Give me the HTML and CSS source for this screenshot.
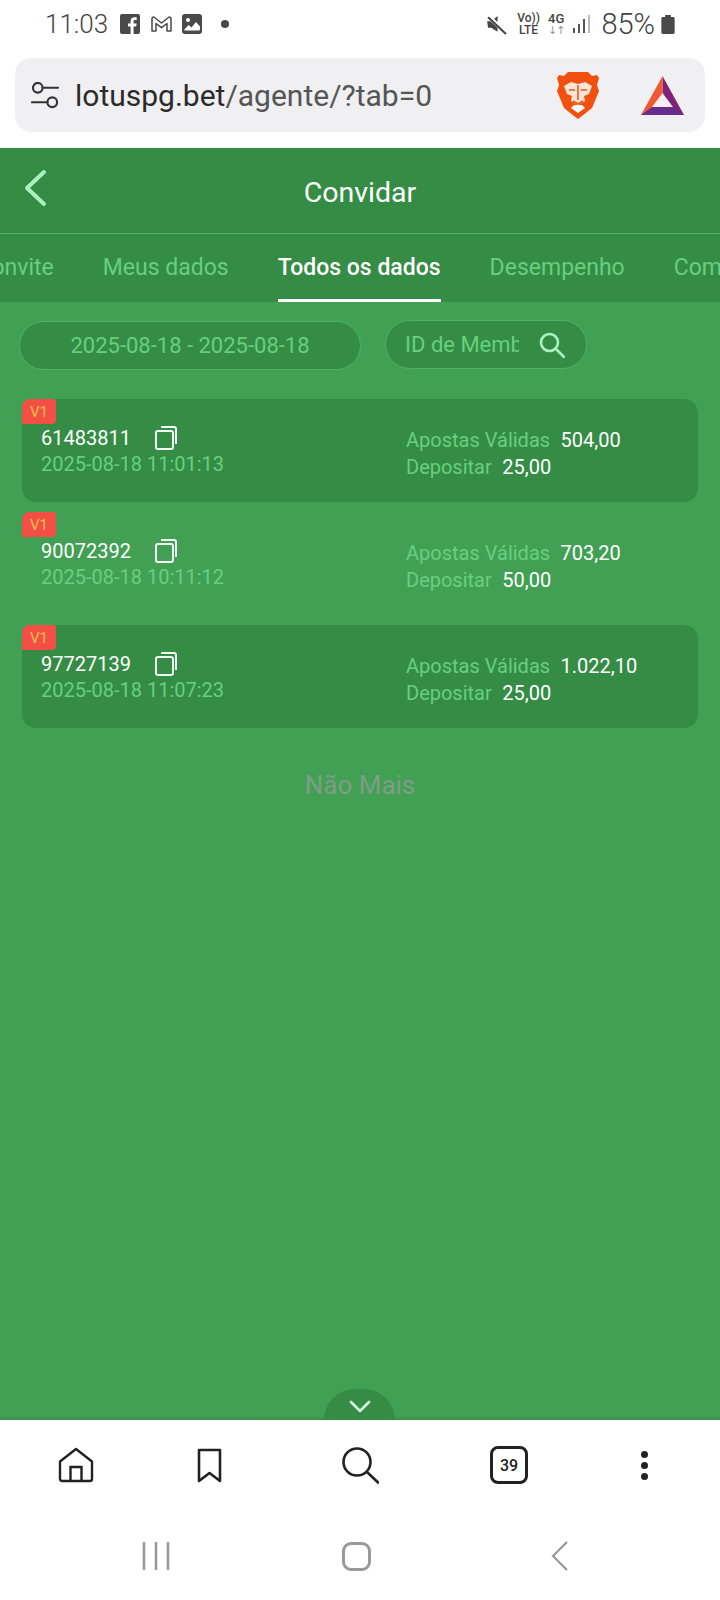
FILE: index.html
```html
<!DOCTYPE html>
<html lang="pt">
<head>
<meta charset="utf-8">
<title>Convidar</title>
<link rel="stylesheet" href="styles.css">
</head>
<body>
<div class="phone">
  <header class="status">
    <div class="status-left">
      <span class="time">11:03</span>
      <svg class="ic-fb" viewBox="0 0 20 20"><rect width="20" height="20" rx="2" fill="#4a4a4a"/><path d="M13.6 20v-7.6h2.6l.4-3h-3V7.5c0-.9.3-1.4 1.500-1.400h1.600V3.400c-.3 0-1.200-.1-2.300-.1-2.300 0-3.800 1.400-3.800 3.900v2.200H8v3h2.600V20z" fill="#fff"/></svg>
      <svg class="ic-m" viewBox="0 0 23 20"><path d="M2 17V4.500a1.500 1.500 0 0 1 2.500-1L11.500 9l7-5.500a1.500 1.500 0 0 1 2.500 1V17h-4V9.500l-5.500 4.200L6 9.500V17z" fill="none" stroke="#4a4a4a" stroke-width="1.500" stroke-linejoin="round"/></svg>
      <svg class="ic-pic" viewBox="0 0 20 20"><rect width="20" height="20" rx="3" fill="#4a4a4a"/><circle cx="6" cy="6" r="2" fill="#fff"/><path d="M2 16l4.500-5 3 2.500L14 8l4 4.500V15.500a1 1 0 0 1-1 1H3z" fill="#fff"/></svg>
      <span class="dot"></span>
    </div>
    <div class="status-right">
      <svg class="ic-mute" viewBox="0 0 20 20"><path d="M1 7h4l6-5v15l-6-4H2z" fill="#444"/><path d="M2 2l17 16" stroke="#fff" stroke-width="4"/><path d="M2 3l17 16" stroke="#444" stroke-width="2"/></svg>
      <div class="net"><span>Vo))</span><span>LTE</span></div>
      <div class="net net-4g"><span>4G</span><span class="arrows">↓↑</span></div>
      <svg class="ic-signal" viewBox="0 0 18 20"><rect x="0" y="14" width="2" height="5" fill="#555"/><rect x="5" y="10" width="2" height="9" fill="#555"/><rect x="10" y="5" width="2" height="14" fill="#555"/><rect x="15" y="1" width="2" height="18" fill="#bbb"/></svg>
      <span class="pct">85%</span>
      <svg class="ic-batt" viewBox="0 0 14 20"><path d="M4 0h6v2h2.500A1.500 1.500 0 0 1 14 3.500V18.500A1.500 1.500 0 0 1 12.500 20h-11A1.500 1.500 0 0 1 0 18.500V3.500A1.500 1.500 0 0 1 1.500 2H4z" fill="#4a4a4a"/></svg>
    </div>
  </header>

  <div class="url-wrap">
    <div class="url-bar">
      <svg class="ic-tune" viewBox="0 0 30 28"><circle cx="7" cy="6" r="5" fill="none" stroke="#333" stroke-width="2.200"/><path d="M12 6h16M1 21h16" stroke="#333" stroke-width="2.200" stroke-linecap="round"/><circle cx="22" cy="21" r="5" fill="none" stroke="#333" stroke-width="2.200"/></svg>
      <div class="url"><span class="host">lotuspg.bet</span>/agente/?tab=0</div>
      <svg class="ic-brave" viewBox="0 0 42 47">
        <path d="M21 0h10l4 4 5-1 2 3-2 7 2 6-7 17-10 8-4 3-4-3-10-8L0 19l2-6-2-7 2-3 5 1 4-4z" fill="#f2500f"/>
        <path d="M21 41l-7-5 3-3h8l3 3z" fill="#fff"/>
        <path d="M7 14l7-4 7 2 7-2 7 4-3 8-5 2 1 5-7 4-7-4 1-5-5-2z" fill="#fbe4d8"/>
        <path d="M21 13v15M12 18h6M24 18h6M16 29l5 3 5-3" stroke="#f2500f" stroke-width="1.500" fill="none"/>
      </svg>
      <svg class="ic-bat" viewBox="0 0 43 39">
        <path d="M21.500 0L43 39H31L21.500 17z" fill="#7f2278"/>
        <path d="M21.500 0L0 39h12l9.500-22z" fill="#f05a30"/>
        <path d="M0 39l11-8h21l11 8z" fill="#662d91"/>
        <path d="M21.500 17L11 31h21z" fill="#f7eef2"/>
      </svg>
    </div>
  </div>

  <main class="app">
    <div class="app-head">
      <div class="title-row">
        <svg class="ic-back" viewBox="0 0 24 38"><path d="M21 3L4 19l17 16" fill="none" stroke="#a9f3c1" stroke-width="4" stroke-linecap="round" stroke-linejoin="round"/></svg>
        <h1 class="title">Convidar</h1>
      </div>
      <nav class="tabs">
        <span class="tab">Convite</span>
        <span class="tab">Meus dados</span>
        <span class="tab tab-active"><span class="tab-label">Todos os dados</span></span>
        <span class="tab">Desempenho</span>
        <span class="tab">Comissão</span>
      </nav>
    </div>

    <div class="filters">
      <div class="pill pill-date">2025-08-18 - 2025-08-18</div>
      <div class="pill pill-search">
        <input class="search-input" type="text" placeholder="ID de Membro">
        <svg class="ic-search" viewBox="0 0 26 26"><circle cx="10.500" cy="10.500" r="8.500" fill="none" stroke="#a9f3c1" stroke-width="2.600"/><path d="M17 17l8 8" stroke="#a9f3c1" stroke-width="2.600" stroke-linecap="round"/></svg>
      </div>
    </div>

    <section class="list">
      <article class="row row-dark">
        <span class="badge">V1</span>
        <div class="col-left">
          <div class="id-line"><span class="id">61483811</span><svg class="ic-copy" viewBox="0 0 22 24"><rect x="1" y="5" width="17" height="18" rx="2" fill="none" stroke="#f2fff5" stroke-width="2"/><path d="M6 1h13a2 2 0 0 1 2 2v15" fill="none" stroke="#f2fff5" stroke-width="2"/></svg></div>
          <div class="date">2025-08-18 11:01:13</div>
        </div>
        <div class="col-right">
          <div class="stat"><span class="label">Apostas Válidas</span><span class="value">504,00</span></div>
          <div class="stat"><span class="label">Depositar</span><span class="value">25,00</span></div>
        </div>
      </article>
      <article class="row">
        <span class="badge">V1</span>
        <div class="col-left">
          <div class="id-line"><span class="id">90072392</span><svg class="ic-copy" viewBox="0 0 22 24"><rect x="1" y="5" width="17" height="18" rx="2" fill="none" stroke="#f2fff5" stroke-width="2"/><path d="M6 1h13a2 2 0 0 1 2 2v15" fill="none" stroke="#f2fff5" stroke-width="2"/></svg></div>
          <div class="date">2025-08-18 10:11:12</div>
        </div>
        <div class="col-right">
          <div class="stat"><span class="label">Apostas Válidas</span><span class="value">703,20</span></div>
          <div class="stat"><span class="label">Depositar</span><span class="value">50,00</span></div>
        </div>
      </article>
      <article class="row row-dark">
        <span class="badge">V1</span>
        <div class="col-left">
          <div class="id-line"><span class="id">97727139</span><svg class="ic-copy" viewBox="0 0 22 24"><rect x="1" y="5" width="17" height="18" rx="2" fill="none" stroke="#f2fff5" stroke-width="2"/><path d="M6 1h13a2 2 0 0 1 2 2v15" fill="none" stroke="#f2fff5" stroke-width="2"/></svg></div>
          <div class="date">2025-08-18 11:07:23</div>
        </div>
        <div class="col-right">
          <div class="stat"><span class="label">Apostas Válidas</span><span class="value">1.022,10</span></div>
          <div class="stat"><span class="label">Depositar</span><span class="value">25,00</span></div>
        </div>
      </article>
    </section>

    <p class="no-more">Não Mais</p>

    <div class="collapse">
      <svg class="ic-down" viewBox="0 0 22 13"><path d="M2 2l9 9 9-9" fill="none" stroke="#d4fbdf" stroke-width="2.600" stroke-linecap="round" stroke-linejoin="round"/></svg>
    </div>
  </main>

  <nav class="browser-nav">
    <svg class="ic-home" viewBox="0 0 36 36"><path d="M2 14.500L18 2l16 12.500V32a2 2 0 0 1-2 2H4a2 2 0 0 1-2-2z" fill="none" stroke="#222" stroke-width="2.400" stroke-linejoin="round"/><path d="M12.500 34V20h11v14" fill="none" stroke="#222" stroke-width="2.400"/></svg>
    <svg class="ic-mark" viewBox="0 0 25 35"><path d="M2 2h21v31l-10.500-8L2 33z" fill="none" stroke="#222" stroke-width="2.600" stroke-linejoin="round"/></svg>
    <svg class="ic-find" viewBox="0 0 38 38"><circle cx="16" cy="16" r="13.500" fill="none" stroke="#222" stroke-width="2.600"/><path d="M26 26l11 10.500" stroke="#222" stroke-width="2.600" stroke-linecap="round"/></svg>
    <div class="tab-count">39</div>
    <div class="dots"><span></span><span></span><span></span></div>
  </nav>

  <nav class="system-nav">
    <svg class="ic-recents" viewBox="0 0 28 28"><path d="M2 1v26M14 1v26M26 1v26" stroke="#999" stroke-width="2.600" stroke-linecap="round"/></svg>
    <span class="ic-square"></span>
    <svg class="ic-sysback" viewBox="0 0 17 30"><path d="M16 1L2 15l14 14" fill="none" stroke="#999" stroke-width="2.200"/></svg>
  </nav>
</div>
</body>
</html>
```

FILE: styles.css
```css
* { box-sizing: border-box; }
html, body { margin: 0; padding: 0; }
body { font-family: Roboto, "Liberation Sans", sans-serif; background: #fff; }
svg { display: block; flex: none; }

.phone { width: 720px; height: 1600px; display: flex; flex-direction: column; overflow: hidden; background: #fff; }

/* status bar */
.status { height: 58px; flex: none; display: flex; justify-content: space-between; align-items: center; padding: 0 45px 10px; color: #444; }
.status-left, .status-right { display: flex; align-items: center; }
.time { font-size: 26px; font-weight: 300; width: 75px; }
.ic-fb { width: 20px; height: 20px; }
.ic-m { width: 23px; height: 20px; margin-left: 10px; }
.ic-pic { width: 20px; height: 20px; margin-left: 9px; }
.dot { width: 8px; height: 8px; border-radius: 50%; background: #4a4a4a; margin-left: 19px; }
.ic-mute { width: 21px; height: 21px; }
.net { display: flex; flex-direction: column; align-items: center; font-size: 12px; line-height: 12px; font-weight: 500; color: #444; margin-left: 10px; }
.net-4g { margin-left: 8px; font-size: 13px; }
.arrows { color: #999; font-size: 11px; line-height: 11px; font-family: "DejaVu Sans", sans-serif; letter-spacing: -1px; }
.ic-signal { width: 18px; height: 20px; margin-left: 9px; }
.pct { font-size: 29px; font-weight: 300; margin-left: 10px; }
.ic-batt { width: 14px; height: 19px; margin-left: 6px; }

/* url bar */
.url-wrap { height: 90px; flex: none; padding: 0 15px; }
.url-bar { height: 74px; border-radius: 16px; background: #f0eff1; display: flex; align-items: center; padding: 0 21px 0 16px; }
.ic-tune { width: 29px; height: 27px; }
.url { font-size: 30px; color: #555; margin-left: 15px; flex: 1; white-space: nowrap; }
.host { color: #2b2b2b; }
.ic-brave { width: 42px; height: 47px; }
.ic-bat { width: 43px; height: 39px; margin-left: 42px; }

/* app */
.app { flex: 1; position: relative; background: linear-gradient(to top, #38904a, #42a055 5px); display: flex; flex-direction: column; }
.app-head { background: #358c45; flex: none; }
.title-row { height: 86px; position: relative; display: flex; align-items: center; justify-content: center; border-bottom: 1px solid #4bb366; padding-top: 4px; }
.ic-back { position: absolute; left: 23px; top: 21px; width: 24px; height: 38px; }
.title { margin: 0; font-size: 28.500px; font-weight: 400; color: #fff; }
.tabs { height: 68px; display: flex; overflow: hidden; margin-left: -48px; width: 768px; }
.tab { flex: none; padding: 0 24.500px; font-size: 23px; color: #67cf7f; line-height: 68px; white-space: nowrap; }
.tab-active { color: #fff; font-weight: 500; }
.tab-label { display: block; height: 68px; border-bottom: 3px solid #fff; }

.filters { display: flex; align-items: flex-start; gap: 24px; padding: 18px 0 0 19px; }
.pill { height: 49px; border-radius: 25px; background: #358c45; border: 1px solid #4bb366; display: flex; align-items: center; font-size: 22px; color: #67cf7f; }
.pill-date { width: 342px; justify-content: center; margin-top: 1px; }
.pill-search { width: 202px; padding-left: 19px; }
.search-input { width: 114px; padding: 0; border: 0; outline: 0; background: transparent; font: inherit; color: #67cf7f; }
.search-input::placeholder { color: #67cf7f; opacity: 1; }
.ic-search { width: 26px; height: 26px; margin-left: 20px; }

.list { display: flex; flex-direction: column; gap: 10px; padding: 29px 22px 0; }
.row { position: relative; height: 103px; display: flex; border-radius: 14px; padding: 27px 0 0 19px; font-size: 20px; line-height: 26px; }
.row-dark { background: #358c45; }
.badge { position: absolute; left: 0; top: 0; width: 34px; height: 25px; background: #f44f45; color: #f7c04f; font-size: 15px; line-height: 26px; padding-left: 8px; border-radius: 8px 3px 4px 0; }
.col-left { width: 365px; margin-top: -1px; }
.id-line { display: flex; align-items: center; height: 26px; }
.id { width: 114px; color: #fff; }
.ic-copy { width: 22px; height: 24px; margin-top: -1px; }
.date { color: #67cf7f; }
.col-right { padding-top: 1px; line-height: 27px; }
.stat { display: flex; gap: 10.500px; }
.label { color: #67cf7f; }
.value { color: #fff; }

.no-more { margin: 43px 0 0; text-align: center; font-size: 26px; line-height: 28px; color: #7f9d85; }

.collapse { position: absolute; left: 324px; bottom: 0; width: 71px; height: 31px; border-radius: 36px 36px 0 0; background: #358c45; display: flex; justify-content: center; padding-top: 11px; }
.ic-down { width: 22px; height: 13px; }

/* browser nav */
.browser-nav { height: 112px; flex: none; display: grid; grid-template-columns: 136px 130px 172px 126px 144px; padding: 0 4px 22px 8px; justify-items: center; align-items: center; }
.ic-home { width: 36px; height: 36px; }
.ic-mark { width: 25px; height: 35px; }
.ic-find { width: 38px; height: 38px; }
.tab-count { width: 38px; height: 38px; border: 3px solid #222; border-radius: 8px; display: flex; align-items: center; justify-content: center; font-size: 16px; font-weight: 500; color: #222; }
.dots { display: flex; flex-direction: column; gap: 4px; }
.dots span { width: 7px; height: 7px; border-radius: 50%; background: #222; }

.system-nav { height: 68px; flex: none; display: grid; grid-template-columns: 311px 91px 314px; padding-right: 4px; align-items: center; justify-items: center; padding-bottom: 20px; }
.ic-recents { width: 28px; height: 28px; }
.ic-square { width: 29px; height: 29px; border: 3px solid #999; border-radius: 9px; }
.ic-sysback { width: 17px; height: 30px; }
```
